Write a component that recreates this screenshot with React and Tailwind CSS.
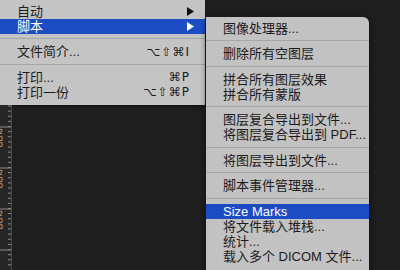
import React from 'react';

const cjk = { fontFamily: '"Liberation Sans", "Noto Sans CJK SC", sans-serif' };
const keys = { fontFamily: '"DejaVu Sans", "Liberation Sans", sans-serif' };

// left menu (File menu tail)
const fileMenu = [
  { label: '自动', arrow: true },
  { label: '脚本', arrow: true, active: true },
  { sep: true },
  { label: '文件简介...', keys: '⌥⇧⌘I' },
  { sep: true },
  { label: '打印...', keys: '⌘P' },
  { label: '打印一份', keys: '⌥⇧⌘P' },
];

// scripts submenu
const scriptMenu = [
  { label: '图像处理器...' },
  { sep: true },
  { label: '删除所有空图层' },
  { sep: true },
  { label: '拼合所有图层效果' },
  { label: '拼合所有蒙版' },
  { sep: true },
  { label: '图层复合导出到文件...' },
  { label: '将图层复合导出到 PDF...' },
  { sep: true },
  { label: '将图层导出到文件...' },
  { sep: true },
  { label: '脚本事件管理器...' },
  { sep: true },
  { label: 'Size Marks', active: true },
  { label: '将文件载入堆栈...' },
  { label: '统计...' },
  { label: '载入多个 DICOM 文件...' },
];

function Separator() {
  return (
    <div className="h-[10.5px] flex items-center">
      <div className="h-px w-full bg-[#a6a6a6]" />
    </div>
  );
}

function Arrow({ white }) {
  return (
    <svg width="7" height="9" viewBox="0 0 7 9" className="block">
      <path d="M0 0 L7 4.5 L0 9 Z" fill={white ? '#ffffff' : '#111111'} />
    </svg>
  );
}

function Ruler() {
  const majors = [22, 63, 104, 145];
  const ticks = [];
  for (let y = 1; y < 165; y += 5.125) ticks.push(y);
  return (
    <svg width="12" height="165" className="block shrink-0">
      <rect x="0" y="0" width="11" height="165" fill="#262626" />
      <line x1="11.5" y1="0" x2="11.5" y2="165" stroke="#4a4a4a" />
      {ticks.map((y, i) => (
        <line key={i} x1="8" y1={y} x2="11" y2={y} stroke="#8a8a8a" strokeWidth="1" />
      ))}
      {majors.map((y, k) => (
        <g key={y}>
          <line x1="0" y1={y} x2="11" y2={y} stroke="#8a8a8a" />
          {k < 3 &&
            ['2', '0', '0'].map((d, j) => (
              <text key={j} x="-1.5" y={y + 7 + j * 6.5} fontSize="7" fill="#c9bea2" style={keys}>
                {d}
              </text>
            ))}
        </g>
      ))}
    </svg>
  );
}

export default function App() {
  return (
    <div className="w-[400px] h-[270px] overflow-hidden bg-[#1e1e1e] flex items-start text-[13px] text-[#1b1b1b]" style={cjk}>
      {/* File menu + ruler below */}
      <div className="w-[205px] shrink-0 flex flex-col">
        <div className="bg-[#c4c4c4] pt-[3.5px] pb-[5px] shadow-[0_1px_2px_rgba(0,0,0,0.5)]">
          {fileMenu.map((item, i) =>
            item.sep ? (
              <Separator key={i} />
            ) : (
              <div
                key={i}
                className={`h-[15px] flex items-center pl-[17px] leading-none ${item.active ? 'bg-[#1b4cc3] text-white' : ''}`}
              >
                <span className="flex-1">{item.label}</span>
                {item.keys && (
                  <span className="pr-[15px] text-[12px] tracking-[1px]" style={keys}>{item.keys}</span>
                )}
                {item.arrow && (
                  <span className="pr-[11px]"><Arrow white={item.active} /></span>
                )}
              </div>
            )
          )}
        </div>
        <Ruler />
      </div>

      {/* Scripts submenu */}
      <div className="w-[163px] h-[260px] ml-px mt-[17px] shrink-0 bg-[#c2c2c2] rounded-tr-[6px] pt-[3.5px] shadow-[0_2px_6px_rgba(0,0,0,0.5)]">
        {scriptMenu.map((item, i) =>
          item.sep ? (
            <Separator key={i} />
          ) : (
            <div
              key={i}
              className={`h-[15px] flex items-center pl-[17px] leading-none whitespace-nowrap ${item.active ? 'bg-[#1b4cc3] text-white' : ''}`}
            >
              {item.label}
            </div>
          )
        )}
      </div>
    </div>
  );
}
